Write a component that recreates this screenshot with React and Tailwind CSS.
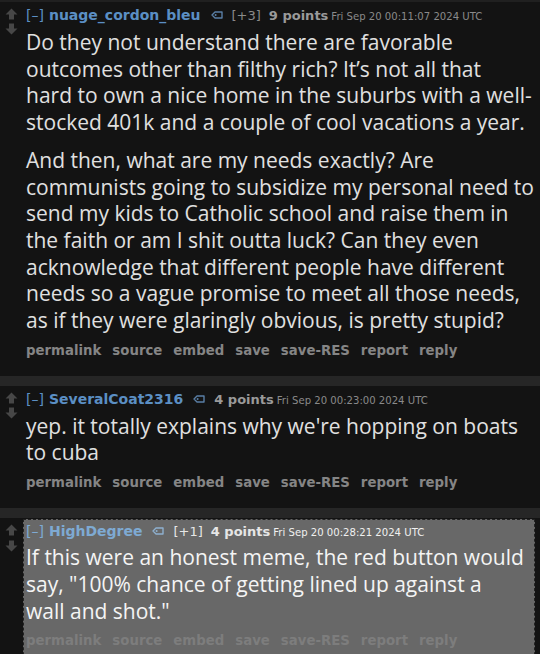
import React from "react";

const Arrow = ({ down, color }) => (
  <svg width="13" height="12" viewBox="0 0 13 12" className={down ? "rotate-180" : ""}>
    <path d="M6.5 0.5 L12.5 6.5 L9 6.5 L9 11.5 L4 11.5 L4 6.5 L0.5 6.5 Z" fill={color} />
  </svg>
);

const Tag = ({ color }) => (
  <svg width="12" height="8" viewBox="0 0 12 8" className="ml-[10px] mr-[9px] self-center">
    <path d="M1 4 L4 1 H11 V7 H4 Z" fill="none" stroke={color} strokeWidth="1.4" strokeLinejoin="round" />
    <circle cx="4.6" cy="4" r="1" fill={color} />
  </svg>
);

const buttons = ["permalink", "source", "embed", "save", "save-RES", "report", "reply"];

function Comment({ c }) {
  const hl = c.highlight;
  return (
    <div className={hl ? "flex pt-[1px]" : "flex pt-[5px] pb-[17px]"}>
      <div className={hl ? "w-[23px] shrink-0 flex flex-col items-center gap-[4px] pt-[5px]" : "w-[23px] shrink-0 flex flex-col items-center gap-[3px] pt-[1px]"}>
        <Arrow color="#474747" />
        <Arrow down color="#474747" />
      </div>
      <div
        className={
          hl
            ? "flex-1 mr-[5px] border border-dashed border-[#222] bg-[#686868] pl-[2px] pt-[3px] pb-[20px]"
            : "flex-1 mr-[5px] pl-[3px]"
        }
      >
        <div className="flex items-baseline h-[16px] leading-[16px] font-['DejaVu_Sans',sans-serif] whitespace-nowrap">
          <span className={hl ? "text-[14px] text-[#7eaad3]" : "text-[14px] text-[#5b8fc4]"}>[–]</span>
          <span className={hl ? "ml-[5px] text-[14px] font-bold text-[#7eaad3]" : "ml-[5px] text-[14px] font-bold text-[#5b8fc4]"}>{c.user}</span>
          <Tag color={hl ? "#8eb0cf" : "#5a7fa6"} />
          {c.score && (
            <span className={hl ? "text-[13px] text-[#e6e6e6] mr-[8px]" : "text-[13px] text-[#8a8a8a] mr-[8px]"}>{c.score}</span>
          )}
          <span className={hl ? "text-[13px] font-bold text-[#e6e6e6]" : "text-[13px] font-bold text-[#9a9a9a]"}>{c.points}</span>
          <span className={hl ? "ml-[3px] text-[10.1px] text-[#f0f0f0]" : "ml-[3px] text-[10.1px] text-[#8a8a8a]"}>{c.date}</span>
        </div>
        <div
          className={
            hl
              ? "mt-[5px] font-['Open_Sans',sans-serif] text-[21px] leading-[26.7px] text-[#f4f4f4] whitespace-nowrap"
              : "mt-[6px] font-['Open_Sans',sans-serif] text-[21px] leading-[26.7px] text-[#e0e0e0] whitespace-nowrap"
          }
        >
          {c.body.map((p, i) => (
            <p key={i} className={i > 0 ? "mt-[11px]" : ""}>
              {p.map((line, j) => (
                <React.Fragment key={j}>
                  {line}
                  {j < p.length - 1 && <br />}
                </React.Fragment>
              ))}
            </p>
          ))}
        </div>
        <div
          className={
            hl
              ? "mt-[9px] flex gap-[11px] h-[16px] leading-[16px] font-['DejaVu_Sans',sans-serif] text-[13.3px] font-bold text-[#7d7d7d]"
              : "mt-[9px] flex gap-[11px] h-[16px] leading-[16px] font-['DejaVu_Sans',sans-serif] text-[13.3px] font-bold text-[#858585]"
          }
        >
          {buttons.map((b) => (
            <span key={b}>{b}</span>
          ))}
        </div>
      </div>
    </div>
  );
}

const comments = [
  {
    user: "nuage_cordon_bleu",
    score: "[+3]",
    points: "9 points",
    date: "Fri Sep 20 00:11:07 2024 UTC",
    body: [
      [
        "Do they not understand there are favorable",
        "outcomes other than filthy rich? It’s not all that",
        "hard to own a nice home in the suburbs with a well-",
        "stocked 401k and a couple of cool vacations a year.",
      ],
      [
        "And then, what are my needs exactly? Are",
        "communists going to subsidize my personal need to",
        "send my kids to Catholic school and raise them in",
        "the faith or am I shit outta luck? Can they even",
        "acknowledge that different people have different",
        "needs so a vague promise to meet all those needs,",
        "as if they were glaringly obvious, is pretty stupid?",
      ],
    ],
  },
  {
    user: "SeveralCoat2316",
    points: "4 points",
    date: "Fri Sep 20 00:23:00 2024 UTC",
    body: [["yep. it totally explains why we're hopping on boats", "to cuba"]],
  },
  {
    user: "HighDegree",
    score: "[+1]",
    points: "4 points",
    date: "Fri Sep 20 00:28:21 2024 UTC",
    highlight: true,
    body: [
      [
        "If this were an honest meme, the red button would",
        'say, "100% chance of getting lined up against a',
        'wall and shot."',
      ],
    ],
  },
];

export default function App() {
  return (
    <div className="w-[540px] h-[654px] overflow-hidden bg-[#131313]">
      <div className="h-[2px] bg-[#202020]" />
      <Comment c={comments[0]} />
      <div className="h-[10px] bg-[#262626]" />
      <Comment c={comments[1]} />
      <div className="h-[10px] bg-[#262626]" />
      <Comment c={comments[2]} />
    </div>
  );
}
